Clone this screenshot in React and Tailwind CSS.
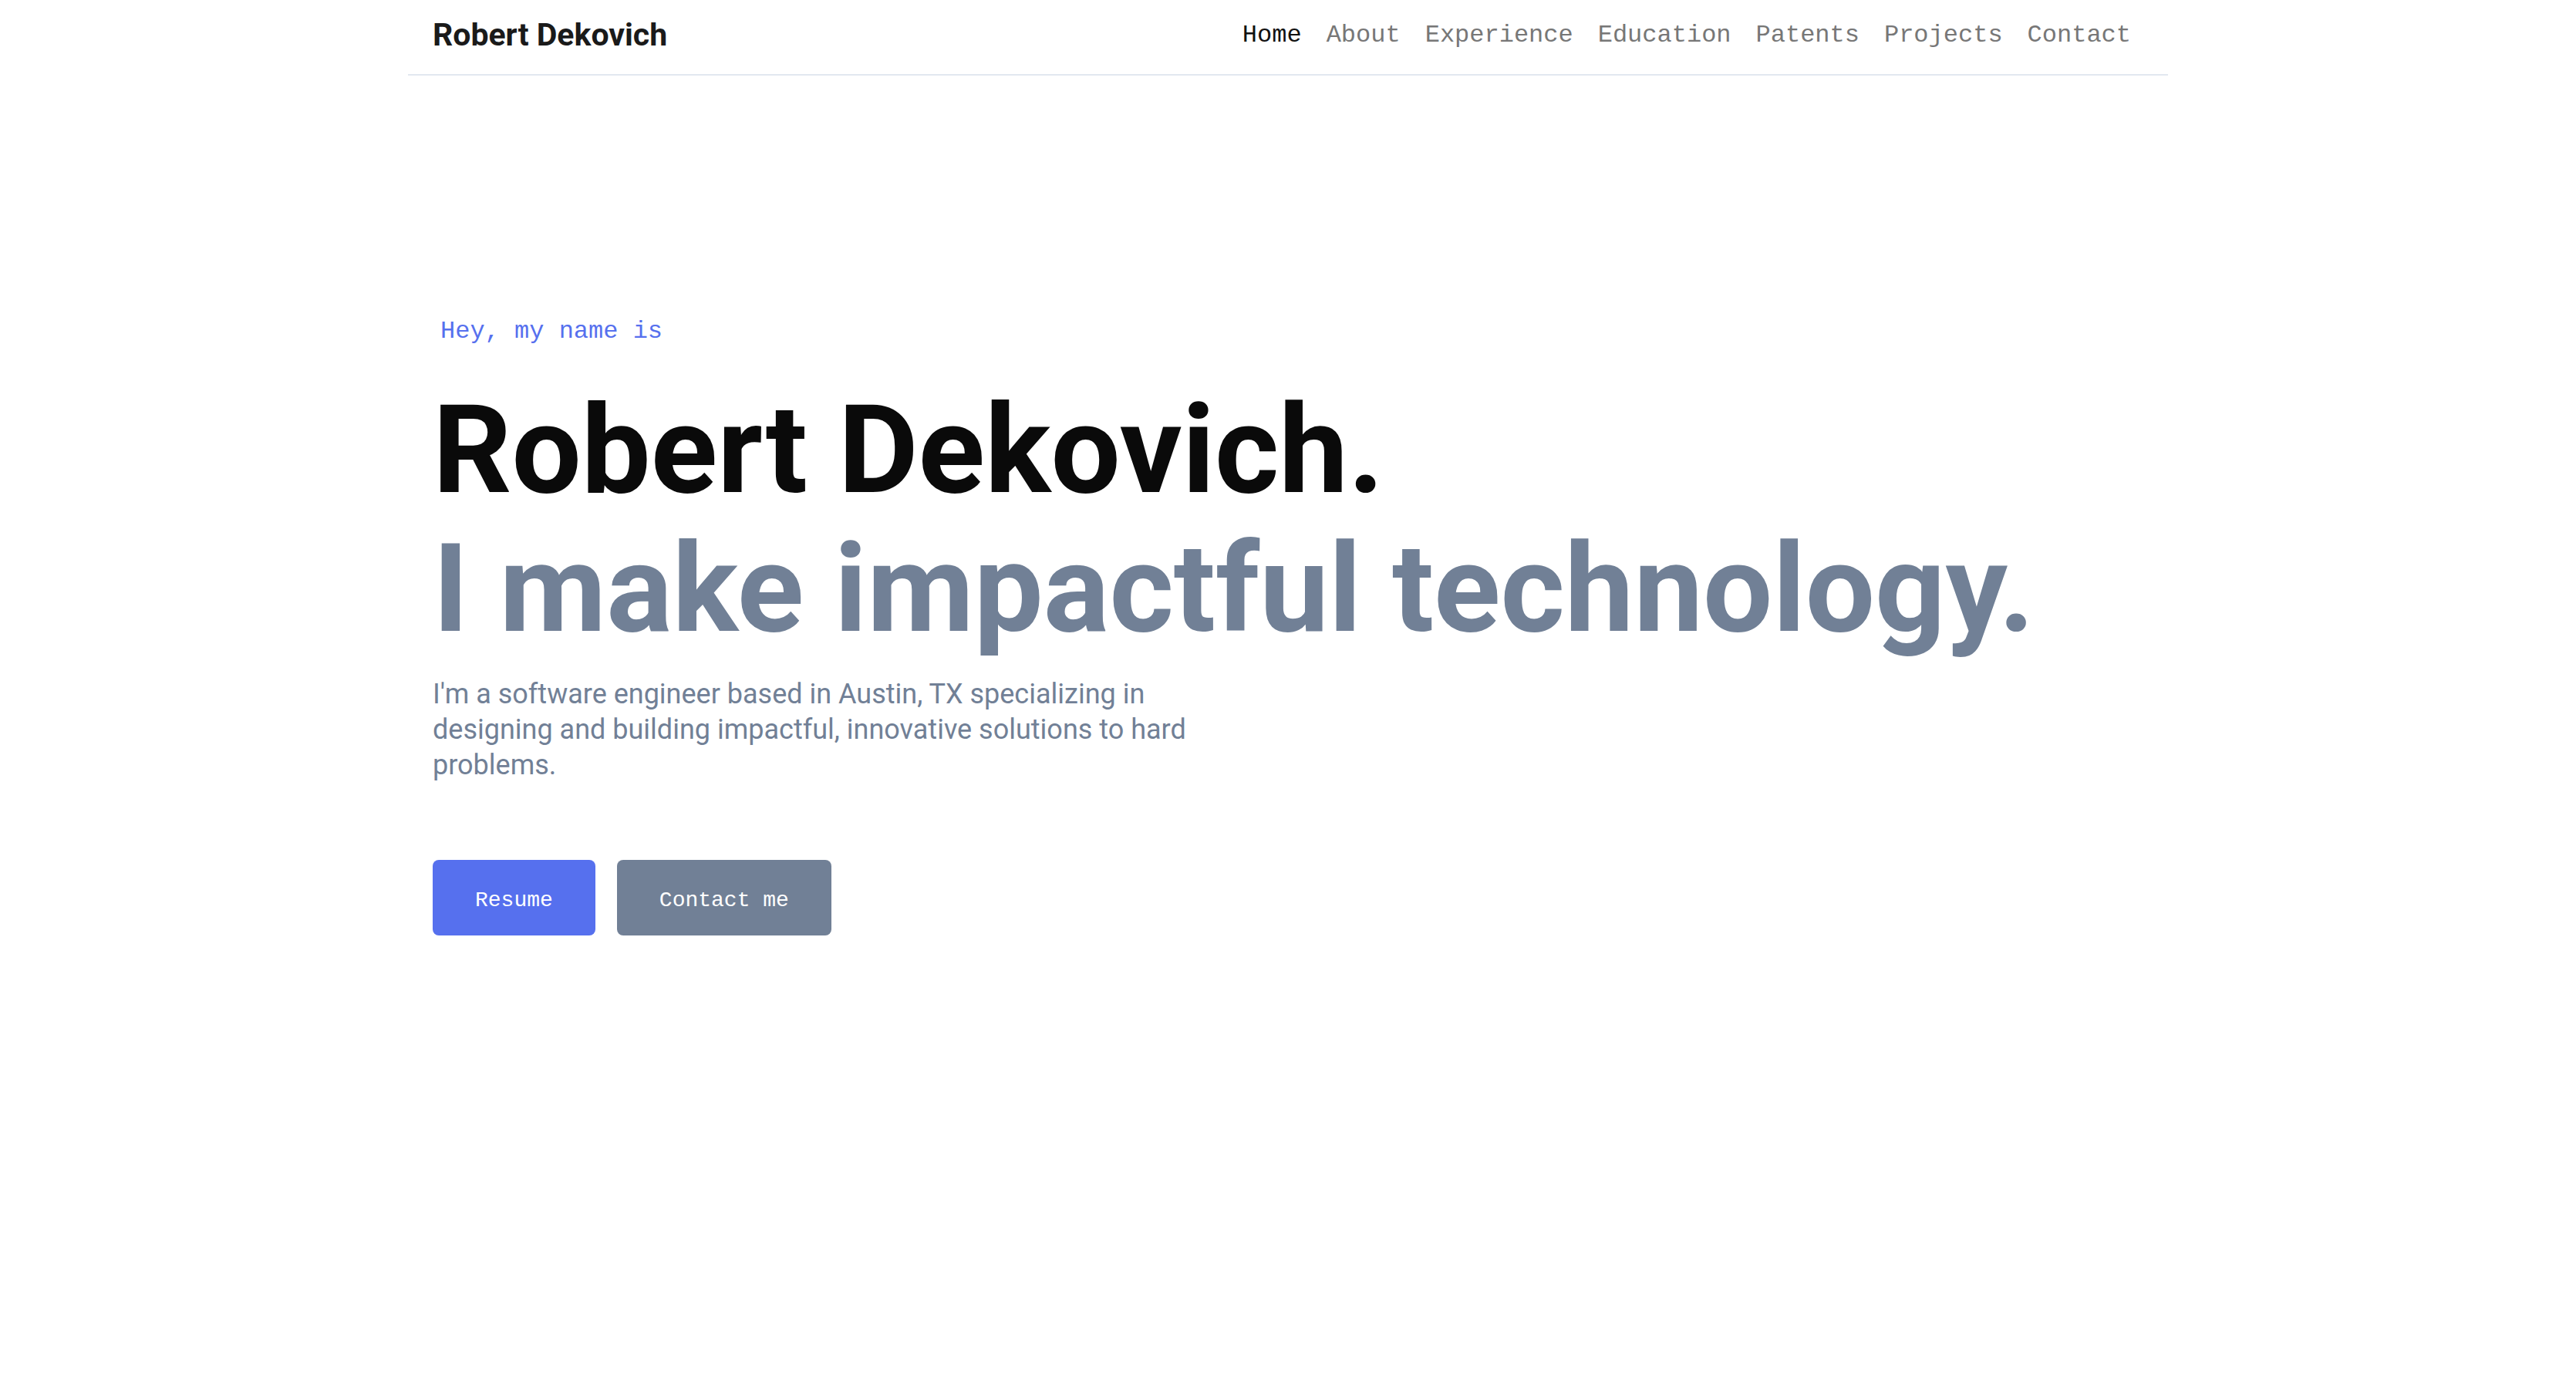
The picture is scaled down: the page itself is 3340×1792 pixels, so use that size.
const navLinks = ["Home", "About", "Experience", "Education", "Patents", "Projects", "Contact"];

const mono = "font-['Courier_New','Nimbus_Mono_PS','FreeMono','Liberation_Mono',monospace]";

function Header() {
  return (
    <header className="mx-auto flex h-[98px] w-full max-w-[2282px] items-center justify-between border-b-2 border-[#e2e8f0] px-[32px] pb-[4px]">
      <a href="#" className="font-['Roboto',sans-serif] text-[41px] font-bold text-[#1a1a1a]">
        Robert Dekovich
      </a>
      <nav className="flex items-center">
        {navLinks.map((link, i) => (
          <a
            key={link}
            href="#"
            className={`px-[16px] ${mono} text-[32px] ${i === 0 ? "text-[#111111]" : "text-[#777777]"}`}
          >
            {link}
          </a>
        ))}
      </nav>
    </header>
  );
}

function Hero() {
  return (
    <section className="mx-auto w-full max-w-[2282px] px-[32px] pt-[308px]">
      <p className={`ml-[10px] ${mono} text-[32px] leading-[48px] text-[#5670ee]`}>
        Hey, my name is
      </p>
      <h1 className="mt-[40px] font-['Roboto',sans-serif] text-[160px] font-bold leading-[180px] text-[#0a0a0a]">
        Robert Dekovich.
      </h1>
      <h2 className="font-['Roboto',sans-serif] text-[160px] font-bold leading-[180px] text-[#718096]">
        I make impactful technology.
      </h2>
      <p className="mt-[23px] max-w-[1010px] font-['Roboto',sans-serif] text-[36px] leading-[46px] text-[#718096]">
        I'm a software engineer based in Austin, TX specializing in designing and building impactful, innovative solutions to hard problems.
      </p>
      <div className="mt-[100px] flex gap-[28px]">
        <a
          href="#"
          className={`flex h-[98px] items-center rounded-[8px] bg-[#5670ee] px-[55px] pt-[8px] ${mono} text-[28px] text-white`}
        >
          Resume
        </a>
        <a
          href="#"
          className={`flex h-[98px] items-center rounded-[8px] bg-[#718096] px-[55px] pt-[8px] ${mono} text-[28px] text-white`}
        >
          Contact me
        </a>
      </div>
    </section>
  );
}

export default function App() {
  return (
    <div className="min-h-screen bg-white">
      <Header />
      <Hero />
    </div>
  );
}
